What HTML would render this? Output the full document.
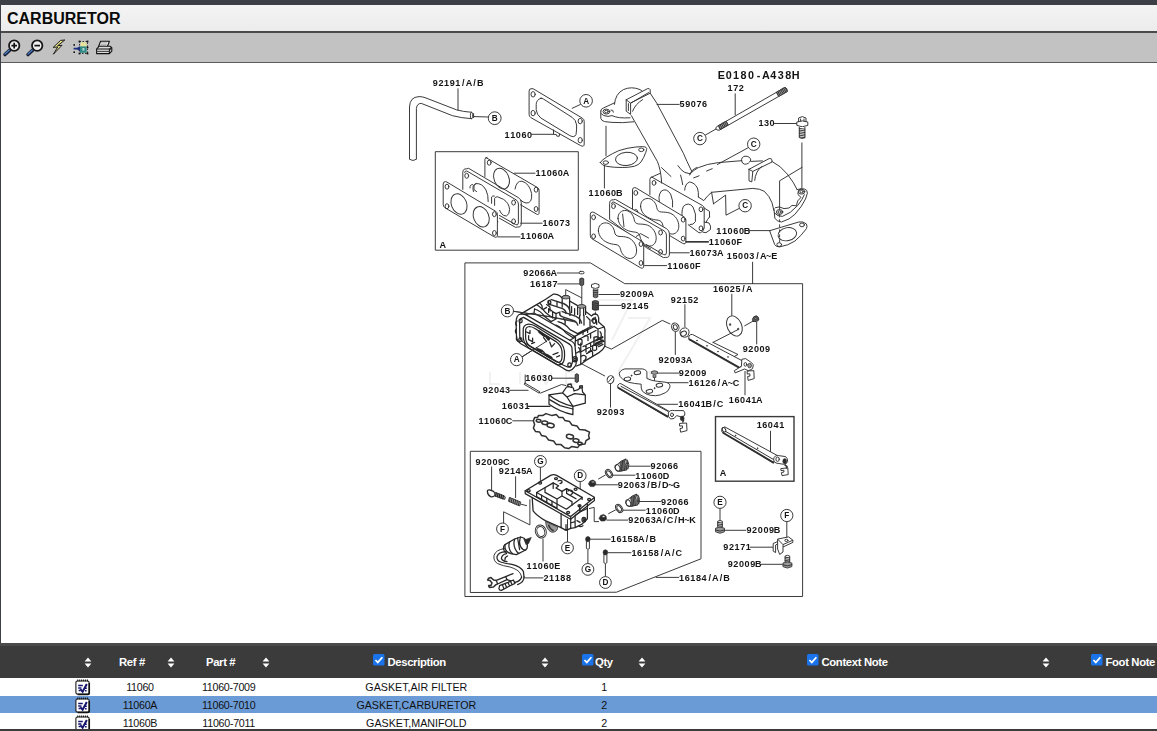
<!DOCTYPE html>
<html><head><meta charset="utf-8"><title>CARBURETOR</title>
<style>
html,body{margin:0;padding:0;}
body{width:1157px;height:731px;overflow:hidden;background:#fff;position:relative;font-family:"Liberation Sans",sans-serif;}
#topbar{position:absolute;left:0;top:0;width:1157px;height:5px;background:#3c3f45;}
#leftedge{position:absolute;left:0;top:0;width:1px;height:644px;background:#3c3f45;}
#title{position:absolute;left:1px;top:5px;width:1156px;height:26px;background:linear-gradient(#f4f4f4,#ececec);}
#title span{position:absolute;left:6px;top:5px;font-size:16px;font-weight:bold;color:#0a0a0a;line-height:18px;}
#titleline{position:absolute;left:0;top:31px;width:1157px;height:2px;background:#4a4a4a;}
#toolbar{position:absolute;left:1px;top:33px;width:1156px;height:29px;background:#c2c2c2;}
#toolline{position:absolute;left:0;top:62px;width:1157px;height:1px;background:#5a5a5a;}
#thead{position:absolute;left:0;top:643px;width:1157px;height:35px;background:#3b3b3b;border-top:3px solid #4a4a4a;box-sizing:border-box;}
.th{position:absolute;top:655px;color:#fff;font-weight:bold;font-size:11.3px;line-height:14px;white-space:nowrap;letter-spacing:-0.35px;}
.row{position:absolute;left:0;width:1157px;height:18px;}

.n{letter-spacing:-0.28px}
.td{position:absolute;font-size:10.7px;line-height:14px;color:#111;white-space:nowrap;transform:translateX(-50%);}
#botline{position:absolute;left:0;top:729px;width:1157px;height:2px;background:#3b3b3b;}
</style></head>
<body>
<div id="topbar"></div>
<div id="title"><span>CARBURETOR</span></div>
<div id="titleline"></div>
<div id="toolbar"></div>
<div id="toolline"></div>
<div id="leftedge"></div>
<svg id="icons" style="position:absolute;left:0;top:33px" width="130" height="29" viewBox="0 33 130 29">
<g stroke-linecap="round">
<line x1="9.6" y1="50.2" x2="5" y2="54.6" stroke="#131c33" stroke-width="3.4"/>
<line x1="9.6" y1="49.8" x2="5" y2="54" stroke="#4f80c8" stroke-width="1.2"/>
<circle cx="14.2" cy="45.6" r="5.2" fill="#f0f0f0" stroke="#181818" stroke-width="1.8"/>
<path d="M11.4 45.6h5.6M14.2 42.8v5.6" stroke="#111" stroke-width="1.7" stroke-linecap="butt"/>
<line x1="32.6" y1="50.2" x2="28" y2="54.6" stroke="#131c33" stroke-width="3.4"/>
<line x1="32.6" y1="49.8" x2="28" y2="54" stroke="#4f80c8" stroke-width="1.2"/>
<circle cx="37.2" cy="45.6" r="5.2" fill="#f0f0f0" stroke="#181818" stroke-width="1.8"/>
<path d="M34.4 45.6h5.6" stroke="#111" stroke-width="1.7" stroke-linecap="butt"/>
</g>
<path d="M64.8 40 L60.6 40.4 L53.2 47.4 L57.8 46.9 L53.4 54.2 L62 45.3 L57.6 45.700 Z" fill="#eeea86" stroke="#1c1c1c" stroke-width="1" stroke-linejoin="round"/>
<g>
<rect x="79.5" y="41.5" width="8" height="12" fill="none" stroke="#222" stroke-width="0.9" stroke-dasharray="1.5 1.5"/>
<rect x="80.6" y="42.4" width="5.8" height="5" fill="#e8e39a"/>
<rect x="80" y="46.4" width="6.6" height="6.4" fill="#2f8a86"/>
<rect x="82.4" y="48" width="2" height="2.6" fill="#b7d9d6"/>
<path d="M73.6 47.8h3.4l3 -1.6v5l-3 -1.6h-3.4z" fill="#1c2f7c"/>
<g fill="#111"><rect x="78.6" y="40.6" width="1.8" height="1.8"/><rect x="86.6" y="40.6" width="1.8" height="1.8"/><rect x="78.6" y="52.6" width="1.8" height="1.8"/><rect x="86.6" y="52.6" width="1.8" height="1.8"/><rect x="73.4" y="44.2" width="1.6" height="1.6"/><rect x="73.4" y="51.4" width="1.6" height="1.6"/><rect x="86.8" y="46.6" width="1.6" height="1.6"/></g>
</g>
<g stroke="#111" stroke-width="1.1" stroke-linejoin="round">
<path d="M100.6 41.2h8.800l-2.200 5.800h-8.800z" fill="#fff"/>
<path d="M96.600 49l2.600-2.800h10.800l1.800 1.400v3.600l-2.400 2.400h-12.800z" fill="#dcdcdc"/>
<path d="M96.600 49h12.800l2.400-1.400M109.400 49v4.600" fill="none"/>
<path d="M96.600 51.400h12.800" stroke="#444" fill="none"/>
<path d="M101 42.800h6.400M100.400 44.300h6.400M99.800 45.800h6.400" stroke="#666" stroke-width="0.600" fill="none"/>
<circle cx="110.800" cy="49.600" r="0.700" fill="#222" stroke="none"/>
</g>
</svg>

<svg id="dg" style="position:absolute;left:0;top:63px;filter:blur(0.4px)" width="1157" height="580" viewBox="0 63 1157 580">
<style>.s{fill:none;stroke:#303030;stroke-width:.95;stroke-linejoin:round;stroke-linecap:round}.w{fill:#fff;stroke:#303030;stroke-width:.95;stroke-linejoin:round}.m{fill:none;stroke:#262626;stroke-width:1.25;stroke-linejoin:round;stroke-linecap:round}.wm2{fill:#fff;stroke:#262626;stroke-width:1.25;stroke-linejoin:round}.b{fill:none;stroke:#3a3a3a;stroke-width:1.4}.k{fill:#2a2a2a;stroke:#2a2a2a;stroke-width:.6}.k2{fill:#5a5a5a;stroke:#2a2a2a;stroke-width:.9}.g{fill:#9a9a9a;stroke:#303030;stroke-width:.8}.t{fill:none;stroke:#303030;stroke-width:1.5;stroke-linejoin:round}.d{fill:none;stroke:#303030;stroke-width:.9;stroke-dasharray:3 2}.l{font:bold 8.9px "Liberation Sans",sans-serif;fill:#141414}.c{font:bold 8.2px "Liberation Sans",sans-serif;fill:#141414}.h{font:bold 10.6px "Liberation Sans",sans-serif;fill:#141414}.wm{fill:none;stroke:#f1f1f1;stroke-width:2}</style>
<text class="l" text-anchor="middle" transform="scale(1.02,1)" x="426.8 432.3 437.8 443.3 448.8 454.3 459.8 465.3 470.9" y="86.3">92191/A/B</text>
<path class="s" d="M458 88.8 L458 110.2"/>
<path class="s" d="M409.5 159 L409.5 107 Q409.8 97 419 96.6 Q423 96.6 426 98 L456.5 109.8 Q463 111.8 471.7 112.3"/>
<path class="s" d="M416.4 159 L416.4 108.5 Q417 103.3 421.3 103.4 L452.5 115.7 Q461 118 471.7 118.7"/>
<path class="s" d="M409.5 159 Q413 162 416.4 159"/>
<ellipse class="s" cx="471.7" cy="115.5" rx="1.3" ry="3.2"/>
<path class="s" d="M473.6 113.6 L473.6 117.6"/>
<path class="s" d="M474.3 116.6 L488.4 117"/>
<circle class="w" cx="494.7" cy="118.2" r="6.4"/>
<text class="c" x="494.7" y="120.9" text-anchor="middle">B</text>
<path class="s" d="M531.6 88.6 Q529.1 88.4 529.1 91 L529.1 114.4 Q529.1 116.6 530.8 117.6 L580.6 145.6 Q584.2 147.4 584.2 144 L584.2 121.4 Q584.2 119.4 582.4 118.2 L533.6 89 Z"/>
<path class="s" d="M541 98.2 Q536.1 99.8 536.2 104.6 L536.2 109.6 Q536.6 114.6 540.8 118 L569.8 135.6 Q574.4 138 576 134.6 Q576.8 130 576.6 125 Q576 119.8 572.2 117.4 L543.4 99 Q542 98.2 541 98.2Z"/>
<ellipse class="s" cx="533.1" cy="94.3" rx="2.1" ry="2.7"/>
<ellipse class="s" cx="533.1" cy="113.1" rx="2.1" ry="2.7"/>
<ellipse class="s" cx="580.2" cy="121.1" rx="2.1" ry="2.7"/>
<ellipse class="s" cx="580.2" cy="140.2" rx="2.1" ry="2.7"/>
<path class="s" d="M553.5 129.9 L553.5 134.2 L556.4 134.6 L556.9 136.2 L559.3 136.2 L559.5 134.2"/>
<text class="l" text-anchor="middle" transform="scale(1.02,1)" x="497.2 502.7 508.2 513.7 519.2" y="137.6">11060</text>
<path class="s" d="M531.6 134.3 L553.5 134.3"/>
<path class="s" d="M580.3 104.5 L572.2 108.3"/>
<circle class="w" cx="586.1" cy="100.8" r="6.3"/>
<text class="c" x="586.1" y="103.5" text-anchor="middle">A</text>
<rect class="s" x="435.7" y="151.7" width="142.6" height="98.5"/>
<text class="l" text-anchor="middle" transform="scale(1.02,1)" x="434" y="247.6">A</text>
<path class="s" d="M487 157.4 Q484.9 157.4 484.9 159.6 L484.9 176.5 M486 157.6 L537.6 187.6 Q539.1 188.6 539.1 190.6 L539.1 212.2 Q539.1 215.6 536.4 214 L520.6 204.8"/>
<ellipse class="s" cx="489.2" cy="162.7" rx="1.9" ry="2.5"/>
<ellipse class="s" cx="536.1" cy="189.7" rx="1.9" ry="2.5"/>
<ellipse class="s" cx="536.1" cy="209" rx="1.9" ry="2.5"/>
<ellipse class="s" cx="501.5" cy="178.6" rx="7.4" ry="10.8" transform="rotate(-22 501.5 178.6)"/>
<path class="s" d="M515 189 Q516.5 180.5 522 181.2 Q529.5 183.5 531.6 193.5 Q532.6 203.5 526 203 Q523 202.5 520.5 200"/>
<text class="l" text-anchor="middle" transform="scale(1.02,1)" x="527.4 532.9 538.4 543.9 549.4 554.9" y="176">11060A</text>
<path class="s" d="M514.3 173.2 L535 173.2"/>
<path class="s" d="M462.8 189.4 L462.8 172.6 Q462.8 168.6 466.6 168.8 L468.6 168.3 L518.6 197.8 Q521.3 199.4 521.3 202.6 L521.3 223.4 Q521.3 227.6 517.4 227 L515.6 227.4 L499.4 218.2"/>
<path class="s" d="M464.6 172.6 Q464.8 170.6 466.8 171 L516 199.8 Q518.4 201.2 518.4 204 L518.4 223 Q518.2 225.8 515.6 224.6 L499.4 215.4"/>
<ellipse class="s" cx="466.7" cy="175.8" rx="1.9" ry="2.5"/>
<ellipse class="s" cx="513.6" cy="202.6" rx="1.9" ry="2.5"/>
<ellipse class="s" cx="513.6" cy="221.4" rx="1.9" ry="2.5"/>
<path class="s" d="M470 188 Q469.6 184.4 472.6 184.6 M473.4 191.6 Q471.6 185 476 183.6 Q482 183 486 190 Q488.4 195 488.2 201.6 M476 183.6 L474 185.4 L474 189.6 L476.6 191.6"/>
<path class="s" d="M491.6 203.4 L491.6 197 Q492.4 195.4 494.4 196 M494.6 205.4 L494.6 198.4 Q495.4 196.6 497.6 196.8 L503.6 199.4 Q509 203 509.6 209.4 Q509.6 214.6 506.4 216 L503.6 215.4 Q500.6 213.6 499.6 210.4"/>
<path class="s" d="M483 212.6 L498 221.6 M485.6 210.6 L497.6 217.6"/>
<text class="l" text-anchor="middle" transform="scale(1.02,1)" x="534.4 539.9 545.4 551 556.5" y="225.7">16073</text>
<path class="s" d="M520.6 223.2 L542.2 223.2"/>
<path class="w" d="M445.4 181.6 Q443.2 181.6 443.2 184 L443.2 204.4 Q443.2 206.8 445 207.8 L493.8 236.6 Q497.4 238.6 497.4 235 L497.4 214.4 Q497.4 212.4 495.8 211.4 L446.8 182 Z"/>
<ellipse class="s" cx="447" cy="186.7" rx="1.9" ry="2.5"/>
<ellipse class="s" cx="447" cy="206.2" rx="1.9" ry="2.5"/>
<ellipse class="s" cx="494.4" cy="214.2" rx="1.9" ry="2.5"/>
<ellipse class="s" cx="494.4" cy="233" rx="1.9" ry="2.5"/>
<ellipse class="s" cx="459" cy="204" rx="7.6" ry="10.6" transform="rotate(-22 459 204)"/>
<ellipse class="s" cx="481.2" cy="216.8" rx="7.6" ry="10.6" transform="rotate(-22 481.2 216.8)"/>
<text class="l" text-anchor="middle" transform="scale(1.02,1)" x="512.6 518.1 523.6 529.1 534.6 540.1" y="239.5">11060A</text>
<path class="s" d="M497.8 236.9 L520 236.9"/>
<text class="h" text-anchor="middle" transform="scale(1.02,1)" x="707.1 714.4 721.7 729 736.3 743.6 750.9 758.2 765.5 772.8 780.1" y="79.5">E0180-A438H</text>
<text class="l" text-anchor="middle" transform="scale(1.02,1)" x="715.8 721.3 726.8" y="90.7">172</text>
<path class="s" d="M735.2 93.8 L735.2 114.9"/>
<path class="w" d="M717.2 126.4 L784.6 87.6 Q787.4 87.6 787.2 91.6 L719.4 130.2 Q716.4 130.6 715.8 128.6 Q715.8 127 717.2 126.4Z"/>
<path class="g" d="M776.6 92.2 L784.6 87.6 Q787.4 87.6 787.2 91.6 L778.8 96.4Z M718.4 125.7 L726.2 121.2 L728 124.8 L720 129.6Z"/>
<path class="s" d="M718.6 125.6 L720.6 129.2"/>
<path class="s" d="M720.1 124.7 L722.1 128.3"/>
<path class="s" d="M721.6 123.9 L723.6 127.5"/>
<path class="s" d="M723.1 123 L725.1 126.6"/>
<path class="s" d="M724.6 122.2 L726.6 125.8"/>
<path class="s" d="M726.1 121.3 L728.1 124.9"/>
<path class="s" d="M776.4 92.3 L778.4 95.9"/>
<path class="s" d="M777.9 91.5 L779.9 95.1"/>
<path class="s" d="M779.3 90.6 L781.3 94.2"/>
<path class="s" d="M780.8 89.8 L782.8 93.4"/>
<path class="s" d="M782.2 89 L784.2 92.6"/>
<path class="s" d="M783.6 88.1 L785.6 91.7"/>
<path class="s" d="M785.1 87.3 L787.1 90.9"/>
<path class="s" d="M705.3 135.1 L716 129"/>
<circle class="w" cx="699.9" cy="138.6" r="6.2"/>
<text class="c" x="699.9" y="141.3" text-anchor="middle">C</text>
<text class="l" text-anchor="middle" transform="scale(1.02,1)" x="746 751.5 757" y="126.1">130</text>
<path class="s" d="M774.2 123.5 L796.7 123.5"/>
<path class="w" d="M798.6 122 L798.6 118 Q802.2 115.2 806 118 L806 122 M796.8 122 Q802.2 119.8 807.8 122 L807.8 125.4 Q802.2 128.2 796.8 125.4Z M800.6 118.6 L800.6 121.4 M804 118.6 L804 121.4"/>
<path class="w" d="M799.3 127 L799.3 137.6 Q802.1 139.4 804.9 137.6 L804.9 127"/>
<path class="s" d="M799.3 128.4 L804.9 129.2"/>
<path class="s" d="M799.3 130.1 L804.9 130.9"/>
<path class="s" d="M799.3 131.8 L804.9 132.6"/>
<path class="s" d="M799.3 133.5 L804.9 134.3"/>
<path class="s" d="M799.3 135.2 L804.9 136"/>
<path class="s" d="M799.3 136.9 L804.9 137.7"/>
<path class="s" d="M801.9 142.9 L801.9 188.4"/>
<path class="s" d="M801.9 167.4 L779.6 180.8 L779.6 209.5"/>
<text class="l" text-anchor="middle" transform="scale(1.02,1)" x="668.7 674.2 679.8 685.3 690.8" y="107.3">59076</text>
<path class="s" d="M657 104.4 L679.2 104.4"/>
<path class="s" d="M600.8 111 Q600.6 109 603.4 108 L614.6 102.8 M600.8 111 L600.8 118.4 Q601.2 120.6 604.6 121.6 L612 122.4 Q622 123.2 633.6 121.8 M601 113.6 Q603 116.2 608 116.4 L612 115.6 Q618 118.6 630 117.8"/>
<ellipse class="s" cx="606.4" cy="111.6" rx="3.4" ry="2.5"/>
<ellipse class="s" cx="606.4" cy="111.6" rx="1.8" ry="1.3"/>
<path class="s" d="M611 110 Q613.4 109.4 613.4 112.2"/>
<path class="s" d="M614.4 104.4 Q615.4 93.6 623.4 89.6 Q631.6 86 640 89.6 L642 91"/>
<path class="s" d="M626.2 99.8 L647.6 88.6 Q649.8 88.4 650.2 89.6 L650.2 93.2 L631 102.8 M626.2 99.8 L626.2 111.2 L630.6 114.4 L630.6 103.2 L626.2 99.8 M628.4 103.6 L628.4 110.6"/>
<path class="s" d="M630.6 103.2 L648.6 92.6"/>
<path class="s" d="M650.2 93.2 L657 103.6 L683.4 153.3 Q686.6 161 691.6 171"/>
<path class="s" d="M631.4 115.7 L657.4 161.5 Q660.6 169 661.5 180.6"/>
<path class="s" d="M632.6 111.2 Q635 104.4 642.6 99.6"/>
<path class="s" d="M600.3 162.6 Q601 160.6 606.4 157.2 Q612 153.6 618.7 150.7 Q627 147.8 635.9 147 L642.5 146.6 Q647.6 146.8 646.6 149.6 L645.8 152.3 Q644 157.6 640.9 162.1 Q638.6 165 634.3 166.3 Q628 167.6 622.8 167.5 Q614 167.6 606.4 166.3 Q602 165.6 600.3 162.6Z"/>
<ellipse class="s" cx="626.5" cy="158.9" rx="11" ry="6.6" transform="rotate(-5 626.5 158.9)"/>
<ellipse class="s" cx="605.8" cy="162.6" rx="2.7" ry="1.8"/>
<ellipse class="s" cx="641.3" cy="149.8" rx="2.6" ry="1.8"/>
<path class="s" d="M606 126.2 L606 155.8"/>
<path class="s" d="M604.4 165.6 L604.4 188"/>
<text class="l" text-anchor="middle" transform="scale(1.02,1)" x="579.5 585 590.5 596 601.6 607.1" y="196.5">11060B</text>
<path class="s" d="M661.5 167.6 L671 176.5 M677.9 165.6 Q681 170.4 684.7 172.4 L690.2 173.8 M680.6 175.1 Q682 180 682.7 184.7"/>
<path class="s" d="M690.2 173.8 Q693.6 170 698.4 167.6 Q707 163.8 718.3 162.6 L741.6 160.7"/>
<path class="s" d="M741.6 160.7 Q741 157 745 156.2 Q750 156 750.8 160 Q749 164.4 744.6 164.2 Q741.8 163.6 741.6 160.7 M750.9 161.4 L762.4 160.9"/>
<path class="s" d="M772 161.4 Q781 166 787.3 174.1 Q794 182.6 797 189.4"/>
<path class="s" d="M749 169.3 L769.1 158.6 Q771.4 158.2 772 159.7 L772 162 L752.8 171.4 M749 169.3 L749 180.8 L751.8 181.9 L752.8 171.4 L749 169.3"/>
<path class="s" d="M754.7 180.4 Q755.4 171.4 761.6 166.6"/>
<path class="s" d="M711.6 192.3 L752.8 188.4 Q760 188.6 764.3 191.3 Q769.6 196 772 202.8 L773.9 210.5"/>
<path class="s" d="M773.9 208.5 L774.8 218.1 Q776.6 221.6 781.5 222 Q790 219.6 794.9 214.3 Q802 206.6 805.5 199 L807.4 193.2 Q807.4 189.6 804.5 189 Q801 188.2 797 189.6"/>
<path class="s" d="M774.4 213 Q777.6 216.6 782.4 216.4 Q790.6 213.6 797.6 205.6 Q802.4 199.6 804.4 194.6 M775.4 207.6 Q779 205.6 784 208.6 Q790 209 792 205.4 L796.4 205.8 L797.6 201 L801 197.4 L798 194.6 Q797.4 190.6 800.6 189"/>
<ellipse class="s" cx="779.6" cy="212" rx="3.2" ry="2.4"/>
<ellipse class="s" cx="779.6" cy="212" rx="1.6" ry="1.2"/>
<ellipse class="s" cx="801.6" cy="191.7" rx="3.2" ry="2.4"/>
<ellipse class="s" cx="801.6" cy="191.7" rx="1.6" ry="1.2"/>
<path class="s" d="M684.7 190.2 Q685 183.6 689.6 182 Q694.6 182.6 697.4 188 Q698.8 192 698.4 197"/>
<path class="s" d="M689.6 175 Q691 169.4 697.2 167.4"/>
<path class="s" d="M693.6 177.9 L699.1 175.8"/>
<path class="s" d="M706.6 171 L712.2 168.7"/>
<path class="s" d="M748.2 147.7 L717.4 164.5"/>
<circle class="w" cx="753.7" cy="144.2" r="6.2"/>
<text class="c" x="753.7" y="146.9" text-anchor="middle">C</text>
<path class="s" d="M711.6 192.3 L713.5 203.8 M713.5 203.8 L725.6 195.1 L726 215.2 L739 208.5"/>
<circle class="w" cx="745.1" cy="205.7" r="6.2"/>
<text class="c" x="745.1" y="208.4" text-anchor="middle">C</text>
<path class="s" d="M652 176.9 Q649.9 176.9 649.9 179.4 L649.9 194.6 M651.6 177 L702.6 205.6 Q704.2 206.6 704.2 208.6 L704.2 228 Q703.6 231.4 700.6 232.7 L698.9 232.7 L688.2 224.7"/>
<ellipse class="s" cx="654" cy="182.9" rx="1.9" ry="2.4"/>
<ellipse class="s" cx="701" cy="209.3" rx="1.9" ry="2.4"/>
<ellipse class="s" cx="701" cy="228.3" rx="1.9" ry="2.4"/>
<path class="s" d="M660.4 205 Q657 196.6 661.4 191 Q666.4 187.6 670.6 194 Q673.6 201 672.6 207 "/>
<path class="s" d="M683.4 221 Q680.4 213 683.4 206.4 Q688.4 201.4 693 207 Q696.6 213.6 695.4 221.6 Q693.4 225.2 690 224.6"/>
<path class="s" d="M704.2 208 L709.5 211.4 L709.5 217 M704.2 222 L709 223 Q711.4 226 710.4 229.6 L706 232.7 L703 232.2 M709.5 217 Q707 219.6 706 222.4"/>
<path class="s" d="M661.5 180.6 L661.6 183 M652.6 176.7 L660 173.4"/>
<path class="s" d="M698.4 197 L703.8 200.6 Q707 196 711.6 192.3"/>
<path class="w" d="M634.6 187.6 Q632.5 187.6 632.5 190 L632.5 211.2 Q632.5 213.4 634.2 214.4 L682.4 243.2 Q685.9 245 685.9 241.6 L685.9 220 Q685.9 218 684.2 217 L636.2 188 Z"/>
<ellipse class="s" cx="635.8" cy="192.9" rx="1.9" ry="2.4"/>
<ellipse class="s" cx="635.8" cy="211.9" rx="1.9" ry="2.4"/>
<ellipse class="s" cx="683.2" cy="219.7" rx="1.9" ry="2.4"/>
<ellipse class="s" cx="683.2" cy="238.6" rx="1.9" ry="2.4"/>
<path class="s" d="M640.6 206.6 C640.2 201.1 644.2 198 648.7 198.5 C653.2 199.2 656.2 203.6 656.8 207.6 C657.2 210.6 658.7 211.6 661.2 212 C664.2 212.2 666.7 212 670.2 213.2 C675.2 215.2 679 220.6 678.8 226.6 C678.6 231.6 675.2 234.6 671.2 234 C666.7 233.2 663.6 229 662.8 225.1 C662.2 222.1 660.7 220.6 658.2 220.2 C654.7 219.8 652.2 219.4 649.2 218 C644.2 215.6 641 211.6 640.6 206.6Z"/>
<text class="l" text-anchor="middle" transform="scale(1.02,1)" x="697.3 702.8 708.3 713.8 719.3 724.8" y="245.3">11060F</text>
<path class="s" d="M686.4 242.2 L708.4 242.2"/>
<path class="w" d="M609.6 219.4 L609.6 203.6 Q609.6 199.6 613.4 199.8 L615.4 199.4 L666.4 228.6 Q669.4 230.4 669.4 233.6 L669.4 254 Q669.4 258 665.6 257.4 L663.4 257.6 L646.4 247.6Z"/>
<path class="s" d="M611.6 203.6 Q611.8 201.6 613.8 202 L664 230.8 Q666.4 232.2 666.4 235 L666.4 253 Q666.2 255.8 663.6 254.6 L646.4 244.6"/>
<ellipse class="s" cx="613.5" cy="206.2" rx="1.9" ry="2.4"/>
<ellipse class="s" cx="660.6" cy="232.6" rx="1.9" ry="2.4"/>
<ellipse class="s" cx="660.6" cy="251.9" rx="1.9" ry="2.4"/>
<path class="s" d="M618 218.6 C617.6 213.1 621.6 210 626.1 210.5 C630.6 211.2 633.6 215.6 634.2 219.6 C634.6 222.6 636.1 223.6 638.6 224 C641.6 224.2 644.1 224 647.6 225.2 C652.6 227.2 656.4 232.6 656.2 238.6 C656 243.6 652.6 246.6 648.6 246 C644.1 245.2 641 241 640.2 237.1 C639.6 234.1 638.1 232.6 635.6 232.2 C632.1 231.8 629.6 231.4 626.6 230 C621.6 227.6 618.4 223.6 618 218.6Z"/>
<path class="s" d="M622.6 214 L624 226.6 M636.4 236.4 L640.6 233.6 L648.6 238 M644 245 L650.4 248.6"/>
<text class="l" text-anchor="middle" transform="scale(1.02,1)" x="678.5 684 689.6 695.1 700.6 706.1" y="256.3">16073A</text>
<path class="s" d="M669.6 252.8 L689.2 252.8"/>
<path class="w" d="M592.4 212 Q590.3 212 590.3 214.4 L590.3 235.6 Q590.3 237.8 592 238.8 L640.2 267.6 Q643.7 269.4 643.7 266 L643.7 244.4 Q643.7 242.4 642 241.4 L594 212.4 Z"/>
<ellipse class="s" cx="593.6" cy="217.3" rx="1.9" ry="2.4"/>
<ellipse class="s" cx="593.6" cy="236.3" rx="1.9" ry="2.4"/>
<ellipse class="s" cx="641" cy="244.1" rx="1.9" ry="2.4"/>
<ellipse class="s" cx="641" cy="263" rx="1.9" ry="2.4"/>
<path class="s" d="M598.4 231 C598 225.5 602 222.4 606.5 222.9 C611 223.6 614 228 614.6 232 C615 235 616.5 236 619 236.4 C622 236.6 624.5 236.4 628 237.6 C633 239.6 636.8 245 636.6 251 C636.4 256 633 259 629 258.4 C624.5 257.6 621.4 253.4 620.6 249.5 C620 246.5 618.5 245 616 244.6 C612.5 244.2 610 243.8 607 242.4 C602 240 598.8 236 598.4 231Z"/>
<text class="l" text-anchor="middle" transform="scale(1.02,1)" x="656.6 662.1 667.6 673.1 678.6 684.1" y="268.7">11060F</text>
<path class="s" d="M644.6 265.6 L666.6 265.6"/>
<path class="s" d="M770 230.6 L798.8 222 Q803 221 806.4 223.9 Q807.6 226.4 806.4 228.7 Q801 236 794.9 241.1 Q788 245.6 779.6 246.9 Q775.6 246.9 774.8 244.9 Z"/>
<ellipse class="s" cx="787.3" cy="234.2" rx="9.4" ry="6.5" transform="rotate(-12 787.3 234.2)"/>
<ellipse class="s" cx="802" cy="224.9" rx="2.4" ry="1.9"/>
<ellipse class="s" cx="779.2" cy="244.6" rx="2.4" ry="1.9"/>
<path class="d" d="M779.6 214.3 L779.6 243"/>
<text class="l" text-anchor="middle" transform="scale(1.02,1)" x="704.8 710.3 715.8 721.3 726.9 732.4" y="233.6">11060B</text>
<path class="s" d="M749.3 230.6 L770 230.6"/>
<path class="s" d="M685.7 241.5 L708.4 241.5"/>
<text class="l" text-anchor="middle" transform="scale(1.02,1)" x="715.1 720.6 726.1 731.6 737.1 742.7 748.2 753.7 759.2" y="259.1">15003/A~E</text>
<path class="s" d="M752.6 262.2 L752.6 283.6"/>
<path class="s" d="M464.9 596.1 L464.9 262.9 L590.4 262.9 L624.8 283.7 L802.6 283.7 L802.6 596.1 Z"/>
<path class="s" d="M470.3 592.1 L470.3 451.3 L701 451.3 L701 558.8 L616.7 592.1 Z"/>
<path class="wm" d="M598 300 L632 300 L612 340 M628 318 L650 318 L618 372 M490 372 L490 384 L500 384 M520 372 L520 384 M540 372 L546 384 L552 372 M575 372 L566 372 L566 384 L575 384 M566 378 L573 378 M640 372 L640 384 M640 372 L650 372 L650 378 L640 378 L650 384"/>
<text class="l" text-anchor="middle" transform="scale(1.02,1)" x="515.5 521 526.5 532 537.5 543" y="276.1">92066A</text>
<path class="s" d="M557.2 273 L579 273"/>
<path class="s" d="M580.4 271.4 L582.8 271.4 Q584 271.4 584 272.6 Q584 273.8 582.8 273.8 L580.4 273.8 Q579.2 273.8 579.2 272.6 Q579.2 271.4 580.4 271.4Z"/>
<text class="l" text-anchor="middle" transform="scale(1.02,1)" x="522.1 527.6 533.1 538.6 544.1" y="287">16187</text>
<path class="s" d="M557.8 283.9 L579.4 283.9"/>
<path class="k2" d="M579.8 278.8 Q581.8 277 583.7 278.8 L583.7 284.6 L581.8 286.4 L579.8 284.6Z"/>
<path class="s" d="M581.8 287.4 L581.8 305"/>
<text class="l" text-anchor="middle" transform="scale(1.02,1)" x="610.3 615.8 621.3 626.8 632.3 637.9" y="297.5">92009A</text>
<path class="s" d="M599 294.5 L619.5 294.5"/>
<path class="w" d="M591.5 284.6 Q595.2 282.2 599 284.6 L599 287.4 Q595.2 289.6 591.5 287.4Z"/>
<path class="g" d="M593.4 288.6 L593.4 297 Q595.6 298.6 597.8 297 L597.8 288.6"/>
<path class="s" d="M593.3 290.6 L597.5 290.6"/>
<path class="s" d="M593.3 292.4 L597.5 292.4"/>
<path class="s" d="M593.3 294.2 L597.5 294.2"/>
<path class="s" d="M593.3 296 L597.5 296"/>
<text class="l" text-anchor="middle" transform="scale(1.02,1)" x="611.3 616.8 622.3 627.8 633.3" y="308.7">92145</text>
<path class="s" d="M599 305.4 L620.6 305.4"/>
<path class="k2" d="M592.4 301.4 Q595.4 299.6 598.4 301.4 L598.4 309.4 Q595.4 311.2 592.4 309.4Z"/>
<path class="s" d="M592.4 302.6 L598.4 303.8"/>
<path class="s" d="M592.4 304.6 L598.4 305.8"/>
<path class="s" d="M592.4 306.6 L598.4 307.8"/>
<path class="s" d="M592.4 308.6 L598.4 309.8"/>
<path class="d" d="M595.4 311.6 L595.4 318"/>
<path class="s" d="M565.7 295.2 L565.7 289.6 L581.6 297.8"/>
<path class="s" d="M513.6 311.3 L549 316.6 L575 322"/>
<circle class="w" cx="507.4" cy="310.8" r="6.1"/>
<text class="c" x="507.4" y="313.5" text-anchor="middle">B</text>
<path class="s" d="M522.3 356.7 L546.3 341.4"/>
<circle class="w" cx="516.6" cy="359.6" r="6.1"/>
<text class="c" x="516.6" y="362.3" text-anchor="middle">A</text>
<text class="l" text-anchor="middle" transform="scale(1.02,1)" x="517.4 522.9 528.4 533.9 539.4" y="381.5">16030</text>
<path class="s" d="M552.4 378.2 L575 378.2"/>
<path class="k2" d="M575.2 374.6 Q576.8 372.8 578.4 374.6 L578.4 381.6 Q576.8 383.4 575.2 381.6Z"/>
<text class="l" text-anchor="middle" transform="scale(1.02,1)" x="475.7 481.2 486.7 492.2 497.7" y="393.4">92043</text>
<path class="s" d="M510.3 390.3 L528.1 390.3"/>
<path class="s" d="M525.2 383.2 L539.8 391.8 L539.2 393.2 L524.6 384.6Z"/>
<path class="s" d="M525.2 375 L525.2 383"/>
<path class="s" d="M540.5 393.1 L561.6 384.5 L566 385.6"/>
<path class="s" d="M580.8 363.4 L604.7 375.9"/>
<ellipse class="s" cx="610.5" cy="379.6" rx="3.3" ry="4" transform="rotate(20 610.5 379.6)"/>
<path class="s" d="M608.4 382 L612.6 377.2"/>
<path class="s" d="M610.5 384.2 L610.5 407.2"/>
<text class="l" text-anchor="middle" transform="scale(1.02,1)" x="587.5 593 598.5 604 609.5" y="414.9">92093</text>
<path class="s" d="M604.7 346.2 L611.4 349.1 L662.3 320.4 L669.9 323.9"/>
<text class="l" text-anchor="middle" transform="scale(1.02,1)" x="660.2 665.7 671.2 676.7 682.2" y="303.1">92152</text>
<path class="s" d="M684.9 304.7 L684.9 326.7"/>
<path class="w" d="M680 331 Q681.6 327.4 685.6 327.8 Q689.4 329 689 333 L687.6 336.6 Q684.6 338 681.4 336.4 Q679.6 334 680 331Z"/>
<ellipse class="s" cx="683.6" cy="333.6" rx="3" ry="2.4" transform="rotate(-30 683.6 333.6)"/>
<ellipse class="s" cx="675.3" cy="327.2" rx="3.6" ry="4.3" transform="rotate(-25 675.3 327.2)"/>
<ellipse class="s" cx="675.3" cy="327.2" rx="1.9" ry="2.5" transform="rotate(-25 675.3 327.2)"/>
<path class="s" d="M675.3 332 L675.3 354.5"/>
<text class="l" text-anchor="middle" transform="scale(1.02,1)" x="648 653.5 659 664.5 670 675.5" y="363">92093A</text>
<text class="l" text-anchor="middle" transform="scale(1.02,1)" x="701.5 707 712.5 718 723.5 729 734.5" y="292.5">16025/A</text>
<path class="s" d="M731.8 294.2 L731.8 316.2"/>
<ellipse class="w" cx="734.4" cy="326" rx="7.2" ry="10.6" transform="rotate(-25 734.4 326)"/>
<ellipse class="k" cx="730.1" cy="324.6" rx="0.7" ry="1"/>
<ellipse class="k" cx="738.2" cy="329" rx="0.8" ry="0.8"/>
<path class="s" d="M713 342.4 L738 329.6"/>
<path class="s" d="M744.7 325.8 L753.3 321"/>
<path class="k2" d="M752.4 319.4 Q753.2 316 756.4 315.8 Q759.2 316.8 758.8 320 L756.6 321.6 L753 321.4Z"/>
<ellipse class="w" cx="755.8" cy="318.6" rx="1" ry="0.8"/>
<path class="s" d="M756.7 322.4 L756.7 344"/>
<text class="l" text-anchor="middle" transform="scale(1.02,1)" x="730.6 736.1 741.6 747.1 752.6" y="352.5">92009</text>
<path class="s" d="M713 342.4 L738 354.5 L734.1 356.6"/>
<path class="w" d="M690.6 334.6 Q688 335.6 688.8 339 L739.6 367.6 L744.6 363.6 L743 361.2 L692.4 334.4 Z"/>
<path class="s" d="M689.4 339.4 L739.6 367.8" style="stroke-width:1.9"/>
<ellipse class="k" cx="697" cy="340.6" rx="0.5" ry="0.5"/>
<ellipse class="k" cx="707" cy="345.8" rx="0.5" ry="0.5"/>
<ellipse class="k" cx="718" cy="351.6" rx="0.5" ry="0.5"/>
<ellipse class="k" cx="728" cy="356.9" rx="0.5" ry="0.5"/>
<path class="w" d="M741.8 359.3 L745.6 358.6 L750.6 362 L753.3 364.6 L752.6 368.6 L748.6 370.8 L744.6 369 L735.1 372.9 L734.4 370.6 L741.4 366.4Z"/>
<ellipse class="g" cx="749.6" cy="365.6" rx="1.9" ry="2.2"/>
<ellipse class="s" cx="745.4" cy="364.4" rx="1.4" ry="1.8"/>
<path class="s" d="M747.6 371 L753.8 370.6 L754.2 378.6 L748.2 380.4 L747.6 376.6 L750 376 L749.8 373.8 L747.6 374Z"/>
<path class="s" d="M745 371.4 L745 394.8"/>
<text class="l" text-anchor="middle" transform="scale(1.02,1)" x="717 722.5 728 733.5 739 744.5" y="403.3">16041A</text>
<text class="l" text-anchor="middle" transform="scale(1.02,1)" x="668 673.6 679.1 684.6 690.1" y="376.5">92009</text>
<path class="s" d="M657.6 373.1 L678.6 373.1"/>
<path class="g" d="M651.4 371.6 Q654.4 369.8 657.5 371.6 L657.5 373.6 Q654.4 375.4 651.4 373.6Z M653 375 L653 377.4 L655.9 377.4 L655.9 375"/>
<path class="d" d="M654.5 378 L654.5 388"/>
<text class="l" text-anchor="middle" transform="scale(1.02,1)" x="677.5 683 688.5 694 699.5 705 710.5 716 721.5" y="386">16126/A~C</text>
<path class="s" d="M666.1 382.7 L688.1 382.7"/>
<path class="w" d="M619.2 373.7 Q620 370 624.9 368.9 L642.2 368.9 Q646.9 369.6 646.9 372.7 L646.9 378.5 Q652 381 657.5 381.3 L666.1 382.3 Q670.6 383.6 669.9 387.1 Q668.6 391.4 665.2 392.8 Q660 395.6 655.6 395.7 Q649.6 395.8 646 393.8 Q641.2 391.6 641.2 388 L641.2 384.2 Q634 383.6 628.7 382.3 Q621.6 379.6 620.1 376.5 Z"/>
<ellipse class="s" cx="627.4" cy="379" rx="3.3" ry="1.9" transform="rotate(-8 627.4 379)"/>
<ellipse class="s" cx="637.4" cy="372.7" rx="3.3" ry="1.9" transform="rotate(-8 637.4 372.7)"/>
<ellipse class="s" cx="649.4" cy="391.3" rx="3.3" ry="1.9" transform="rotate(-8 649.4 391.3)"/>
<ellipse class="s" cx="659.4" cy="385.2" rx="3.3" ry="1.9" transform="rotate(-8 659.4 385.2)"/>
<ellipse class="k" cx="631.6" cy="375.6" rx="0.6" ry="0.6"/>
<ellipse class="k" cx="654.6" cy="388.2" rx="0.6" ry="0.6"/>
<text class="l" text-anchor="middle" transform="scale(1.02,1)" x="667.4 672.9 678.4 683.9 689.4 694.9 700.4 705.9" y="407.5">16041B/C</text>
<path class="s" d="M657.5 404.3 L677.6 404.3"/>
<path class="w" d="M619.4 383.6 Q617 384.6 617.8 388 L667.4 416.8 L670.6 412.2 L620.8 383.6 Z"/>
<path class="s" d="M621 386.4 L668 411.4"/>
<path class="s" d="M618.6 388 L667.6 416.6" style="stroke-width:1.9"/>
<path class="w" d="M668.3 413 Q669.6 409.6 674.6 410.6 L683.6 410.6 Q685.6 412.6 684.6 415.6 L681.6 417 L676.6 415.6 Q674.6 419.6 670.6 419 Q667.6 417 668.3 413Z"/>
<ellipse class="s" cx="672" cy="414.8" rx="1.5" ry="1.8"/>
<ellipse class="k" cx="682.2" cy="418.4" rx="1.9" ry="2.3"/>
<path class="t" d="M680.6 418 L683.6 420 L682.6 422.6"/>
<path class="s" d="M679.9 423.4 L686.6 423 L687 430.6 L680.6 432.2 L680 428.6 L682.6 428 L682.4 425.8 L680 426Z"/>
<text class="l" text-anchor="middle" transform="scale(1.02,1)" x="494.5 500 505.5 511 516.6" y="409.3">16031</text>
<path class="m" d="M528.3 406.3 L550 406.3"/>
<path class="wm2" d="M549 394.9 L549 404.2 Q560 412 572.9 414.6 L572.9 406.3 Q559 403 549 394.9Z"/>
<path class="m" d="M549.6 399.6 L560 405.6 L572.9 409"/>
<path class="m" d="M549 394.9 L562.5 392.8 L566.6 387 L568.7 386.6 L573.4 388 L574 391 L578 389.7 L580.6 387.6 L582 388 L582.6 392 L585.3 394.9 L585.3 403.2 L572.9 406.3 M562.5 392.8 L567 397 L572.9 406.3 M567 397 L574.6 393.6 L585.3 394.9"/>
<path class="t" d="M567.6 386.8 L568 384.4 L571 384 L572 387.4 M579.6 388.4 L579.8 386 L582.2 385.8 L582.4 388.2"/>
<text class="l" text-anchor="middle" transform="scale(1.02,1)" x="471.6 477.1 482.6 488.1 493.6 499.1" y="424.2">11060C</text>
<path class="s" d="M512.7 420.8 L533.4 420.8"/>
<path class="t" d="M533.4 420.8 L534.6 417.6 L537.6 417.4 L538.6 415.4 L542.6 415.6 L546 413.6 L552 415.6 L556.3 414.6 L559 417.4 L563 417.6 L565 420.6 L569.6 421.6 L572 425 L577 426 L579.6 429.6 L585 430 L589.5 432.2 L588.6 435.6 L589.4 438.5 L586 440.6 L585 444 L580 444.6 L577.6 447.6 L571.6 446.6 L568.6 448.6 L564.6 447.8 L561 444.6 L556 444.4 L553.6 441 L548.6 440 L546 436.6 L541.6 435.6 L539.6 432 L535.6 431.6 L533.4 428.1 L534.6 424.6Z"/>
<ellipse class="t" cx="538.6" cy="420.8" rx="2.4" ry="1.4" transform="rotate(8 538.6 420.8)"/>
<ellipse class="t" cx="544.8" cy="422.8" rx="3" ry="1.8" transform="rotate(8 544.8 422.8)"/>
<ellipse class="t" cx="550.6" cy="425.4" rx="3.6" ry="2.2" transform="rotate(8 550.6 425.4)"/>
<ellipse class="t" cx="570" cy="436.6" rx="3.6" ry="2.2" transform="rotate(8 570 436.6)"/>
<ellipse class="t" cx="576" cy="440.6" rx="3" ry="1.8" transform="rotate(8 576 440.6)"/>
<ellipse class="t" cx="580" cy="443.6" rx="2.2" ry="1.3" transform="rotate(8 580 443.6)"/>
<path class="wm2" d="M517.1 316.9 Q518 314.4 521 313.9 L525.6 314.6 L569.8 340.3 Q574.6 342.6 575 345.5 L576.3 360.4 Q576.6 364 575 366.3 Q572.6 370 569.1 370.8 Q566 370.6 563.3 368.2 L520.4 343.5 Q517 341 516.5 337.7 L516.1 322.7 Q516 319 517.1 316.9Z"/>
<path class="m" d="M517 321 Q514.6 323 516.6 325.6 M516.4 329 Q514.4 331 516.4 333.6 M516.8 337 Q515.4 340 518.4 341.6"/>
<path class="m" d="M520.6 318.6 L523.6 317.4 L567 342.6 Q571.6 345 572 348 L572.6 361 Q572 366.6 567.6 367 L563 365 L523 342 Q520 340 519.8 336.6 L519.6 322Z"/>
<path class="m" d="M523.2 331 Q522.6 324.6 528.6 324.1 Q532 324 536 326.6 L557 339.6 Q563.6 344 564.4 351 Q565 358 563.6 361.6 Q561.6 366 557 364.6 L529 348 Q523.6 344 523.2 337 Z"/>
<path class="m" d="M525.6 331.6 Q525.2 326.8 529.6 326.5 Q532 326.6 535.4 328.8 L556 341.6 Q561.4 345.6 562 351.4 Q562.4 357.4 561.4 360.2 Q560 363.2 556.6 362 L530.2 346.4 Q525.8 343 525.6 337.4Z"/>
<path class="m" d="M526.6 332 L530 333.6 L530 330.4 M528.6 335.6 L528.6 339.6 L532.6 341.6 L532.6 338 M531.6 343.6 L534.6 342.4 M549.7 342.1 L551.6 346.9 L554.6 343.6 M553 354.6 L558 352.6 M556.6 357 L559.6 355.6 M543.6 337.6 L546.6 341.6"/>
<path class="t" d="M537.7 330.4 Q540 331 541.6 333.4 Q543 336 546 336.4 Q549 337 549.7 339 M536.5 347 Q537 350 540 350.6 Q543.6 351 545 353.6 Q546.6 356.6 550 357 L552.4 358"/>
<path class="m" d="M539.6 332 L544 335.6 M546.6 337 L548.6 339.4 M538.6 349.6 L541.6 351 M546.4 355 L550.6 357.4" style="stroke-width:2.6"/>
<path class="m" d="M525.6 314.6 L534 313 L575.6 337 L575 345.5 M534 313 L534.6 309 M569.8 340.3 L575.6 337"/>
<path class="m" d="M521 313.9 L536.6 304.6 L545.7 299.3 L553.5 294.1 Q557 293.6 560 296 L562.2 298"/>
<path class="m" d="M569.6 301 L577.6 305.6 M585.6 311.6 L591.6 316 Q594 312.6 597.6 315 Q599.6 318 598.6 322 L604.2 327 Q605.6 330 604.9 334 L604.9 346.1 Q603 350.6 599 352.6 L586 360.4 L580.8 364.3 L576.3 366"/>
<path class="wm2" d="M562.2 302.2 L562.2 297 Q565.9 294.4 569.6 297 L569.6 302.2"/>
<ellipse class="g" cx="565.9" cy="297.2" rx="3.7" ry="1.8"/>
<path class="m" d="M562.2 302.2 L562.2 307"/>
<path class="m" d="M569.6 302.2 L569.6 309.6"/>
<path class="wm2" d="M577.6 315 L577.6 306.4 Q581.6 303.4 585.6 306.4 L585.6 315.1"/>
<ellipse class="g" cx="581.6" cy="306.4" rx="4" ry="1.9"/>
<path class="m" d="M580 308.4 L580 315.6"/>
<path class="m" d="M583.6 308.4 L583.6 315.6"/>
<path class="m" d="M579.6 315.6 L579.6 323.6 M584 315.6 L584 325"/>
<path class="t" d="M548.6 300.6 Q547.6 303.6 550.4 304.6 L562.6 308.6 Q566.4 310.6 566 314 M550.6 299.4 L564 303.8 Q570 306.6 570 312.6 L570 316"/>
<path class="t" d="M560 312.6 Q559 315.6 562 316.6 L574.6 321 Q577.6 322.6 578 325.6 M561.6 311.4 L576 316.4 Q581 318.6 581.6 323.6"/>
<ellipse class="m" cx="549.4" cy="302.6" rx="1.4" ry="2.2"/>
<path class="m" d="M536.6 304.6 L543 309.6 Q548 316 555.6 318.4 M534.6 309 Q541 311 544.6 316.6 L551 321.6 M543 309.6 L546.6 307.4 M551 321.6 L556 319 L556 313.6 L552.6 311.6 L552.6 318 M556 313.6 L560 312 M548.6 312.6 L548.6 308.6 L552.6 311.6"/>
<path class="m" d="M556 325 Q562 327.6 566 333 L572.6 337.4 M558 321.6 Q565.6 323.6 570 329.6 L577.6 333.6 M572.6 337.4 L594.2 326.5 M575.6 341 L596 330.5 M577.6 333.6 L592 326"/>
<path class="m" d="M591.7 321 Q592.6 317.6 595 318 Q597 320 596.7 324.4 M594.2 326.5 L598 329 L598 337 M598 329 L604 327 M586 345 L599 338.6 L604 341.6 M586 349 L599.6 342.6 M586 345 L586 352 M590.6 343 L590.6 350.6 M580.8 352 L586 349 M580.8 343 L580.8 364 M576.3 353 L580.8 350.6"/>
<path class="t" d="M594 337.4 Q597.6 335.6 599.6 338.6 M595 341 L601 338 M596.6 345.6 L602.6 342.6 M594 336.7 L594 345"/>
<path class="m" d="M597.4 339.6 L602.4 337.2 M596 343.6 L602.8 340.6" style="stroke-width:2.2"/>
<ellipse class="m" cx="575" cy="359.3" rx="2.3" ry="2.6"/>
<ellipse class="m" cx="575" cy="359.3" rx="1.1" ry="1.3"/>
<ellipse class="m" cx="569.6" cy="365" rx="1.8" ry="2.2"/>
<ellipse class="m" cx="520.6" cy="320.8" rx="1.6" ry="2"/>
<ellipse class="m" cx="520.4" cy="339.6" rx="1.6" ry="2"/>
<path class="m" d="M580.8 356.6 Q584 354 586 356.6 Q586.6 359.6 583.6 361 M588.6 352 Q590.6 350 592.6 352 L592.6 355.6 M583 346.6 Q584.6 345 586 346.6"/>
<path class="m" d="M578 340 Q580 338 582 340 L582 344 Q580 346 578 344Z M584 336.6 Q586 334.6 588 336.6 L588 340.6 M590.6 333.6 L590.6 338 M592.6 346 Q594.6 344 596.6 346 L596.6 349.6 Q594.6 351.4 592.6 349.6Z M586.6 353.6 L592 350.6 M598.6 346.6 L603 344.4 M583 330.6 L583 334.6 M587.6 328.4 L587.6 332.4 M578.6 347.6 Q581 349.6 580 352.6 M600 331.6 Q602 333.6 601 336.6"/>
<path class="m" d="M540 303.4 Q543 305.4 542 309 M546.6 304.6 L550 307 L550 311 M557 301.6 L557 306 M571.6 306.6 L571.6 312.6 M574.6 308.6 L574.6 314.6 M586.6 316.6 L590 320 L590 326 M563.6 318.6 Q566 320.6 565 324"/>
<ellipse class="m" cx="594.2" cy="321.2" rx="1.5" ry="2.1"/>
<path class="s" d="M522.3 356.7 L546.3 341.4"/>
<path class="s" d="M513.6 311.3 L549 316.6 L572 320.6"/>
<text class="l" text-anchor="middle" transform="scale(1.02,1)" x="468.7 474.2 479.8 485.3 490.8 496.3" y="464.9">92009C</text>
<path class="s" d="M491.6 466.9 L491.6 489.9"/>
<text class="l" text-anchor="middle" transform="scale(1.02,1)" x="491.5 497 502.5 508 513.5 519" y="474.5">92145A</text>
<path class="s" d="M515.6 476.7 L515.6 497.6"/>
<path class="wm2" d="M487.4 491.6 Q487.2 489.6 489.6 489.8 L493.6 491.4 Q495.2 493 494.6 495.6 Q493 497.2 490.6 496.6 Q487.6 495 487.4 491.6Z"/>
<path class="g" d="M494.8 492.2 L504.6 496 Q506 497.6 504.8 499.4 L494.4 495.8"/>
<path class="m" d="M496.2 492.8 L495.6 496.2"/>
<path class="m" d="M498 493.5 L497.4 496.9"/>
<path class="m" d="M499.8 494.2 L499.2 497.6"/>
<path class="m" d="M501.6 494.9 L501 498.3"/>
<path class="m" d="M503.4 495.6 L502.8 499"/>
<path class="g" d="M509.4 497.4 L520.8 502 L519.8 506 L508.4 501.2Z"/>
<path class="s" d="M510.2 497.6 L509.4 501.8"/>
<path class="s" d="M512 498.4 L511.2 502.6"/>
<path class="s" d="M513.8 499.1 L513 503.3"/>
<path class="s" d="M515.6 499.9 L514.8 504.1"/>
<path class="s" d="M517.4 500.6 L516.6 504.8"/>
<path class="s" d="M519.2 501.4 L518.4 505.6"/>
<path class="s" d="M521 504.2 L526.6 505.6"/>
<path class="s" d="M540.4 467.3 L540.4 482.2"/>
<circle class="w" cx="540.4" cy="461.4" r="5.9"/>
<text class="c" x="540.4" y="464.1" text-anchor="middle">G</text>
<path class="s" d="M580.2 481.8 L580.2 508.5"/>
<circle class="w" cx="580.2" cy="475.7" r="5.9"/>
<text class="c" x="580.2" y="478.4" text-anchor="middle">D</text>
<path class="s" d="M503.6 522.9 L503.6 511.8 L529.9 524.9 L529.9 499.7"/>
<circle class="w" cx="502.5" cy="528.9" r="5.9"/>
<text class="c" x="502.5" y="531.6" text-anchor="middle">F</text>
<path class="s" d="M567.5 541.8 L567.5 519.4"/>
<circle class="w" cx="567.5" cy="547.9" r="5.9"/>
<text class="c" x="567.5" y="550.6" text-anchor="middle">E</text>
<path class="s" d="M587.9 563.2 L587.9 550.1"/>
<circle class="w" cx="587.9" cy="569.4" r="5.9"/>
<text class="c" x="587.9" y="572.1" text-anchor="middle">G</text>
<path class="s" d="M605.4 576.4 L605.4 564.3"/>
<circle class="w" cx="605.4" cy="582.5" r="5.9"/>
<text class="c" x="605.4" y="585.2" text-anchor="middle">D</text>
<path class="wm2" d="M525.2 490.8 L550.6 475.4 Q553.6 474 556.6 475.4 L594.4 497.2 L594.4 500.4 L570.6 519.2 L525.2 493.6Z"/>
<path class="m" d="M525.2 490.8 L570.7 516.6 L594.4 497.6 M570.7 516.6 L570.7 519"/>
<path class="m" d="M536.6 492.5 L553.2 482.9 L558.6 485.8 L556 488 L562 491.4 L566.6 488.6 L582.1 497.4 L566.3 509.2Z"/>
<path class="m" d="M536.6 492.5 L536.6 496.6 L557 508.4 M553.2 482.9 L553.2 488.4 M541.6 495.2 L541.6 499.6 M546.8 498.2 L546.8 502.6 M552 501.2 L552 505.6 M557 508.4 L557 499 L562 496 L562 491.4 M557 499 L545 492.4 L545 488 M562 496 L572 501.6 L572 505 M566.6 488.6 L566.6 493.4 L576 498.8 M582.1 497.4 L582.1 499.6"/>
<path class="m" d="M568 491 Q570 489.4 572.4 491 Q573.4 493.4 571 494.6 M558 481 Q560 479.6 562 481 Q562.4 483 560 483.6"/>
<ellipse class="m" cx="540.1" cy="482.9" rx="1.5" ry="1.1"/>
<ellipse class="m" cx="528.7" cy="490.8" rx="1.5" ry="1.1"/>
<ellipse class="m" cx="568.1" cy="512.4" rx="1.5" ry="1.1"/>
<ellipse class="m" cx="589.1" cy="499.5" rx="1.5" ry="1.1"/>
<ellipse class="m" cx="579.5" cy="505.7" rx="1.5" ry="1.1"/>
<ellipse class="m" cx="556" cy="478.6" rx="1.5" ry="1.1"/>
<ellipse class="m" cx="575.6" cy="489.2" rx="1.5" ry="1.1"/>
<path class="m" d="M532.2 497.6 L533.1 510.9 Q537 516 545.3 520.6 L561.1 527.6 L561.1 513.6"/>
<path class="m" d="M561.1 527.6 L566 530.4 L570.7 528.4 L570.7 519 M575.1 515.6 L575.1 527.6 L570.7 528.4 M575.1 527.6 L582.1 524.1 L587.4 518.8 L587.4 504 M575.1 515.6 L580 512 L580 508.6 M580 512 L587.4 508.4 M566 530.4 L566 524.6 M570.7 523 L575.1 521.6 M577 520.6 L580 522.4 M578 526 Q581 527.6 583 525.6"/>
<ellipse class="m" cx="583.9" cy="519.7" rx="1.9" ry="2.3"/>
<ellipse class="m" cx="583.9" cy="519.7" rx="0.8" ry="1"/>
<path class="m" d="M579.6 505.7 L579.6 510.4"/>
<path class="g" d="M545.6 521.4 Q546 529.6 551.6 532.2 Q556.4 532.6 557.6 528.4 L557.4 526.6 Q551 524.6 545.6 521.4Z"/>
<path class="t" d="M548.6 524.6 Q549.6 529 553.6 530.8"/>
<ellipse class="s" cx="540.8" cy="531.5" rx="5.4" ry="6.7" transform="rotate(-20 540.8 531.5)"/>
<ellipse class="s" cx="540.8" cy="531.5" rx="3.8" ry="5.1" transform="rotate(-20 540.8 531.5)"/>
<path class="s" d="M543 539.2 L543 561.1"/>
<text class="l" text-anchor="middle" transform="scale(1.02,1)" x="518.7 524.2 529.8 535.3 540.8 546.3" y="569.3">11060E</text>
<text class="l" text-anchor="middle" transform="scale(1.02,1)" x="535.3 540.8 546.3 551.8 557.3" y="581.1">21188</text>
<path class="s" d="M524.4 577.9 L543 577.9"/>
<path class="s" d="M504.6 548.6 Q495.6 549.6 494 555.6 Q493.2 561 497.6 563.6 Q503 566 510 567 Q518.6 569.6 520.6 574 L521.6 577"/>
<path class="m" d="M506 551.6 Q498.4 552 497 556.6 Q496.6 560.6 500.6 562 Q506 563.6 512 564.4 Q521 566.6 523.4 571.6 L524 576.6"/>
<path class="m" d="M506.6 553.6 Q501.6 554.6 501.4 558.6 Q502.6 561 507 561.6 M507.6 556 Q504.6 557 505 559.6"/>
<path class="m" d="M521.6 577 Q520.6 581 515 582.4 M524 576.6 Q524.4 582 517.6 584.6"/>
<path class="wm2" d="M505 544.6 L514.6 539 L520.6 537 Q524.6 537.4 526 540.6 L527.4 545.6 Q527.6 548.6 525.6 550 L516.4 554.6 L510.6 553.6 Q506 552 505 548Z"/>
<path class="m" d="M514.7 539.2 Q513 543.6 515 548.6 Q516.4 552 518.6 553.4 M520.6 537 Q518.6 541.6 520.6 546.6 Q522.4 550 525.6 550 M517.6 538 L519.6 549.6 M509.6 542 Q508 546 510 550.4 Q511 552.6 512.6 553.6 M505 544.6 Q503.4 545.6 503.4 548.6 Q504 552 506.6 553"/>
<path class="k" d="M525.4 539.6 L531.3 537.4 L528.6 543.6 L527 544.6"/>
<path class="t" d="M524 538.4 L526.6 544.6"/>
<path class="wm2" d="M496.3 580.4 L505.6 576.6 L507 579.6 L497.6 584Z"/>
<path class="t" d="M496.3 580.4 L493.6 580 L491 577.6 L488.6 578.2 L487.6 580 L490 580.6 L492 583 L491 585.4 L488.6 585.6 L489.4 587.4 L493.4 587 L496 584.6 L497.6 584"/>
<path class="m" d="M505.6 576.6 L513 573.6 M507 579.6 L515 582.4"/>
<path class="wm2" d="M499.6 585.6 L508 582.4 L509.6 586 L501.4 590.4 Q499.4 590.6 498.9 588.6Z M508 582.4 L513.4 580 L515 583.4 L509.6 586"/>
<path class="m" d="M502.4 584.6 L503.8 588.6"/>
<path class="m" d="M505 583.6 L506.6 587.4"/>
<path class="m" d="M510.6 581.4 L512 584.6"/>
<path class="w" d="M617.0 464.59999999999997 L621.6 460.8 L625.6 459.2 Q628.6 460.59999999999997 628.8000000000001 464.59999999999997 Q628.8000000000001 468.2 626.4 470.0 L619.0 471.4 Q615.2 470.8 615.0 467.8 Q615.2 465.59999999999997 617.0 464.59999999999997Z"/>
<path class="g" d="M619.6 462.59999999999997 L624.2 460.59999999999997 Q626.6 464.8 625.2 470.0 L620.2 471.09999999999997 Q621.4 466.2 619.6 462.59999999999997Z"/>
<path class="s" d="M621 462.1 L621.6 470.7"/>
<path class="s" d="M622.4 461.5 L623 470.4"/>
<path class="s" d="M623.8 461 L624.4 470.1"/>
<ellipse class="s" cx="617.5" cy="467.9" rx="2.3" ry="3.4" transform="rotate(-20 617.5 467.9)"/>
<path class="s" d="M625.6 459.2 Q627.6 464.2 626.4 470.0 M624.2 460.59999999999997 L625.6 459.2 M627.2 460.0 L628.0 468.8"/>
<text class="l" text-anchor="middle" transform="scale(1.02,1)" x="640.3 645.8 651.3 656.8 662.3" y="469.4">92066</text>
<path class="s" d="M628.8 466.2 L650.2 466.2"/>
<path class="w" d="M627.8 499.7 L632.4 495.90000000000003 L636.4 494.3 Q639.4 495.7 639.6 499.7 Q639.6 503.3 637.1999999999999 505.1 L629.8 506.5 Q626.0 505.90000000000003 625.8 502.90000000000003 Q626.0 500.7 627.8 499.7Z"/>
<path class="g" d="M630.4 497.7 L635.0 495.7 Q637.4 499.90000000000003 636.0 505.1 L631.0 506.2 Q632.1999999999999 501.3 630.4 497.7Z"/>
<path class="s" d="M631.8 497.2 L632.4 505.8"/>
<path class="s" d="M633.2 496.6 L633.8 505.5"/>
<path class="s" d="M634.6 496.1 L635.2 505.2"/>
<ellipse class="s" cx="628.3" cy="503" rx="2.3" ry="3.4" transform="rotate(-20 628.3 503)"/>
<path class="s" d="M636.4 494.3 Q638.4 499.3 637.1999999999999 505.1 M635.0 495.7 L636.4 494.3 M638.0 495.1 L638.8 503.90000000000003"/>
<text class="l" text-anchor="middle" transform="scale(1.02,1)" x="650.6 656.1 661.6 667.1 672.6" y="504.6">92066</text>
<path class="s" d="M639.3 501.5 L660.5 501.5"/>
<ellipse class="s" cx="609" cy="473.6" rx="3" ry="4.5" transform="rotate(-35 609 473.6)"/>
<ellipse class="s" cx="609" cy="473.6" rx="1.8" ry="3.2" transform="rotate(-35 609 473.6)"/>
<text class="l" text-anchor="middle" transform="scale(1.02,1)" x="625.3 630.8 636.3 641.8 647.3 652.9" y="478.8">11060D</text>
<path class="s" d="M612.8 475.2 L634.9 475.2"/>
<ellipse class="s" cx="619.2" cy="508.4" rx="3" ry="4.5" transform="rotate(-35 619.2 508.4)"/>
<ellipse class="s" cx="619.2" cy="508.4" rx="1.8" ry="3.2" transform="rotate(-35 619.2 508.4)"/>
<text class="l" text-anchor="middle" transform="scale(1.02,1)" x="635.6 641.1 646.6 652.1 657.6 663.1" y="513.8">11060D</text>
<path class="s" d="M623.3 510.2 L645.2 510.2"/>
<path class="k" d="M588.4 484 L590.0 481 L593.0 480 L595.4 481.6 L596.0 484.6 L594.0 486.6 L590.4 486.6Z"/>
<ellipse class="w" cx="593" cy="482" rx="1.6" ry="1"/>
<path class="s" d="M598.6 478.9 L605.1 475.2"/>
<text class="l" text-anchor="middle" transform="scale(1.02,1)" x="608.1 613.7 619.2 624.7 630.2 635.7 641.2 646.7 652.2 657.7 663.2" y="488.2">92063/B/D~G</text>
<path class="s" d="M596.4 484.8 L617.4 484.8"/>
<path class="k" d="M599 518.4 L600.6 515.4 L603.6 514.4 L606 516.0 L606.6 519.0 L604.6 521.0 L601 521.0Z"/>
<ellipse class="w" cx="603.6" cy="516.4" rx="1.6" ry="1"/>
<path class="s" d="M608.6 513.6 L615.4 510"/>
<text class="l" text-anchor="middle" transform="scale(1.02,1)" x="618.4 624 629.5 635 640.5 646 651.5 657 662.5 668 673.5 679" y="523.2">92063A/C/H~K</text>
<path class="s" d="M606.9 520.1 L627.7 520.1"/>
<path class="s" d="M589.4 508.5 L594.2 507.4 L594.2 521.6 L598.6 521.6"/>
<ellipse class="k" cx="587.9" cy="539.2" rx="2.3" ry="2.6"/>
<path class="s" d="M586.4 541.6 L586.4 548.6 Q587.9 550 589.4 548.6 L589.4 541.6"/>
<text class="l" text-anchor="middle" transform="scale(1.02,1)" x="601.3 606.8 612.3 617.8 623.3 628.8 634.3 639.9" y="542.3">16158A/B</text>
<path class="s" d="M590.6 539.2 L610.2 539.2"/>
<ellipse class="k" cx="605.4" cy="552.4" rx="2.3" ry="2.6"/>
<path class="s" d="M603.9 554.8 L603.9 562.8 Q605.4 564.2 606.9 562.8 L606.9 554.8"/>
<text class="l" text-anchor="middle" transform="scale(1.02,1)" x="621.5 627 632.5 638 643.5 649 654.5 660 665.6" y="556.1">16158/A/C</text>
<path class="s" d="M608.2 552.7 L631 552.7"/>
<text class="l" text-anchor="middle" transform="scale(1.02,1)" x="668.2 673.8 679.3 684.8 690.3 695.8 701.3 706.8 712.3" y="580.6">16184/A/B</text>
<path class="s" d="M656.1 577.4 L678.7 577.4"/>
<rect class="b" x="715.5" y="416.6" width="78.5" height="64.6"/>
<text class="l" text-anchor="middle" transform="scale(1.02,1)" x="708.9" y="475.7">A</text>
<text class="l" text-anchor="middle" transform="scale(1.02,1)" x="744.3 749.8 755.3 760.9 766.4" y="428.2">16041</text>
<path class="s" d="M770.5 431.2 L770.5 452.1"/>
<path class="w" d="M724.8 426.9 Q721.4 427.4 721.6 430.6 Q721.8 432.6 723.4 433 L773.4 462.6 L777.1 455.4 Z"/>
<ellipse class="s" cx="724" cy="429.8" rx="1.6" ry="2.4" transform="rotate(-30 724 429.8)"/>
<path class="s" d="M725.6 431.4 L773 459.2"/>
<path class="s" d="M723.4 433 L773.4 462.6" style="stroke-width:1.9"/>
<ellipse class="k" cx="735.6" cy="435.6" rx="0.5" ry="0.5"/>
<ellipse class="k" cx="757.6" cy="448.2" rx="0.5" ry="0.5"/>
<path class="w" d="M773.6 459 Q774.6 455 778.6 455.6 L785.6 456.6 Q788 458.6 787.6 461.6 Q786.6 464.4 783.6 464.3 L776 463 Q773.4 462 773.6 459Z"/>
<ellipse class="s" cx="777.6" cy="459.2" rx="1.7" ry="2.2"/>
<ellipse class="k" cx="784.7" cy="461.2" rx="1.9" ry="2.6"/>
<path class="t" d="M784.6 464.6 L787 466.6 L786.4 468.6"/>
<path class="s" d="M781.2 468.6 L787.8 467.8 L788.2 474.6 L782 475.6 L781.4 472.6 L784 472 L783.8 470.2 L781.4 470.6Z"/>
<path class="s" d="M720 508.5 L720 520.5"/>
<circle class="w" cx="720" cy="502.3" r="6.1"/>
<text class="c" x="720" y="505" text-anchor="middle">E</text>
<path class="w" d="M717.7 521.1999999999999 L717.7 527.1999999999999 L722.3 527.1999999999999 L722.3 521.1999999999999 Q720 519.8 717.7 521.1999999999999Z"/>
<path class="s" d="M717.7 522.4 L722.3 523"/>
<path class="s" d="M717.7 524 L722.3 524.6"/>
<path class="s" d="M717.7 525.6 L722.3 526.2"/>
<path class="g" d="M715.5 528.1999999999999 Q720 526.0 724.5 528.1999999999999 L724.5 531.8 Q720 534.8 715.5 531.8Z"/>
<path class="s" d="M715.5 530.0 Q720 532.4 724.5 530.0"/>
<text class="l" text-anchor="middle" transform="scale(1.02,1)" x="734.3 739.8 745.3 750.9 756.4 761.9" y="533.5">92009B</text>
<path class="s" d="M725 530.3 L745.8 530.3"/>
<path class="s" d="M786.8 521.6 L786.8 538"/>
<circle class="w" cx="786.8" cy="515.5" r="6.1"/>
<text class="c" x="786.8" y="518.2" text-anchor="middle">F</text>
<path class="w" d="M777.6 539.1 L788.5 536.9 L792.9 540.2 L783 544.6 Z M777.6 539.1 L777.6 549 L779.7 554.4 L783 552 L783 544.6 M773.2 543.5 L777.6 541.6 M773.2 543.5 L773.2 551.1 L775.6 552.6 L775.6 545 L777.6 544 M792.9 540.2 L792.9 542.4 L783 547"/>
<ellipse class="s" cx="786.4" cy="540.4" rx="1.6" ry="1.1"/>
<text class="l" text-anchor="middle" transform="scale(1.02,1)" x="711.6 717.1 722.6 728.1 733.6" y="550.4">92171</text>
<path class="s" d="M750.2 547.2 L772.7 547.2"/>
<text class="l" text-anchor="middle" transform="scale(1.02,1)" x="715.9 721.4 726.9 732.4 737.9 743.4" y="567.4">92009B</text>
<path class="s" d="M761.1 564.3 L781.9 564.3"/>
<path class="w" d="M785.1 556.0 L785.1 562.0 L789.6999999999999 562.0 L789.6999999999999 556.0 Q787.4 554.6 785.1 556.0Z"/>
<path class="s" d="M785.1 557.2 L789.7 557.8"/>
<path class="s" d="M785.1 558.8 L789.7 559.4"/>
<path class="s" d="M785.1 560.4 L789.7 561"/>
<path class="g" d="M782.9 563.0 Q787.4 560.8000000000001 791.9 563.0 L791.9 566.6 Q787.4 569.6 782.9 566.6Z"/>
<path class="s" d="M782.9 564.8000000000001 Q787.4 567.2 791.9 564.8000000000001"/>
</svg>
<div id="thead"></div>
<div class="row" style="top:678px;background:#fff"></div>
<div class="row" style="top:696px;background:#6b9bd6;height:17px"></div>
<div class="row" style="top:713px;background:#fff;height:16px"></div>
<svg style="position:absolute;left:83.5px;top:657px" width="8" height="11" viewBox="0 0 8 11"><path d="M4 0.600 L7.400 4.600 H0.600 Z M4 10.400 L7.400 6.400 H0.600 Z" fill="#fff"/></svg>
<svg style="position:absolute;left:166.5px;top:657px" width="8" height="11" viewBox="0 0 8 11"><path d="M4 0.600 L7.400 4.600 H0.600 Z M4 10.400 L7.400 6.400 H0.600 Z" fill="#fff"/></svg>
<svg style="position:absolute;left:261.5px;top:657px" width="8" height="11" viewBox="0 0 8 11"><path d="M4 0.600 L7.400 4.600 H0.600 Z M4 10.400 L7.400 6.400 H0.600 Z" fill="#fff"/></svg>
<svg style="position:absolute;left:541px;top:657px" width="8" height="11" viewBox="0 0 8 11"><path d="M4 0.600 L7.400 4.600 H0.600 Z M4 10.400 L7.400 6.400 H0.600 Z" fill="#fff"/></svg>
<svg style="position:absolute;left:637.5px;top:657px" width="8" height="11" viewBox="0 0 8 11"><path d="M4 0.600 L7.400 4.600 H0.600 Z M4 10.400 L7.400 6.400 H0.600 Z" fill="#fff"/></svg>
<svg style="position:absolute;left:1041.5px;top:657px" width="8" height="11" viewBox="0 0 8 11"><path d="M4 0.600 L7.400 4.600 H0.600 Z M4 10.400 L7.400 6.400 H0.600 Z" fill="#fff"/></svg>
<svg style="position:absolute;left:373px;top:654px" width="12" height="12" viewBox="0 0 12 12"><rect x="0" y="0" width="11.5" height="11.5" rx="1.5" fill="#1a73e8"/><path d="M2.400 6 L4.800 8.400 L9.400 3.200" fill="none" stroke="#fff" stroke-width="1.7"/></svg>
<svg style="position:absolute;left:582px;top:654px" width="12" height="12" viewBox="0 0 12 12"><rect x="0" y="0" width="11.5" height="11.5" rx="1.5" fill="#1a73e8"/><path d="M2.400 6 L4.800 8.400 L9.400 3.200" fill="none" stroke="#fff" stroke-width="1.7"/></svg>
<svg style="position:absolute;left:807px;top:654px" width="12" height="12" viewBox="0 0 12 12"><rect x="0" y="0" width="11.5" height="11.5" rx="1.5" fill="#1a73e8"/><path d="M2.400 6 L4.800 8.400 L9.400 3.200" fill="none" stroke="#fff" stroke-width="1.7"/></svg>
<svg style="position:absolute;left:1091px;top:654px" width="12" height="12" viewBox="0 0 12 12"><rect x="0" y="0" width="11.5" height="11.5" rx="1.5" fill="#1a73e8"/><path d="M2.400 6 L4.800 8.400 L9.400 3.200" fill="none" stroke="#fff" stroke-width="1.7"/></svg>
<div class="th" style="left:119px">Ref #</div>
<div class="th" style="left:206px">Part #</div>
<div class="th" style="left:387.5px">Description</div>
<div class="th" style="left:595px">Qty</div>
<div class="th" style="left:821.5px">Context Note</div>
<div class="th" style="left:1105.5px">Foot Note</div>
<svg style="position:absolute;left:75px;top:678.5px" width="16" height="17" viewBox="0 0 16 17"><rect x="0.9" y="2" width="13.2" height="13" rx="1.600" fill="#fff" stroke="#1a1a1a" stroke-width="1.100"/><path d="M14.300 4v10.200q0 1.400-1.400 1.400H2.600" stroke="#111" stroke-width="1.500" fill="none"/><path d="M2.200 1.300h10.800" stroke="#1a1a1a" stroke-width="1.700" stroke-dasharray="1.100 0.850"/><path d="M3.200 6.400h4.600M3.200 9h3.200M3.600 11.600h2M9.800 9.200h2M10 11.800h1.600" stroke="#15156e" stroke-width="1.500"/><path d="M5.400 10.200l2.200 2.600l4.200-7.800" fill="none" stroke="#15156e" stroke-width="2"/></svg>
<div class="td n" style="left:140px;top:680px">11060</div>
<div class="td n" style="left:228.7px;top:680px">11060-7009</div>
<div class="td" style="left:416.3px;top:680px">GASKET,AIR FILTER</div>
<div class="td n" style="left:604px;top:680px">1</div>
<svg style="position:absolute;left:75px;top:696.5px" width="16" height="17" viewBox="0 0 16 17"><rect x="0.9" y="2" width="13.2" height="13" rx="1.600" fill="#fff" stroke="#1a1a1a" stroke-width="1.100"/><path d="M14.300 4v10.200q0 1.400-1.400 1.400H2.600" stroke="#111" stroke-width="1.500" fill="none"/><path d="M2.200 1.300h10.800" stroke="#1a1a1a" stroke-width="1.700" stroke-dasharray="1.100 0.850"/><path d="M3.200 6.400h4.600M3.200 9h3.200M3.600 11.600h2M9.800 9.200h2M10 11.800h1.600" stroke="#15156e" stroke-width="1.500"/><path d="M5.400 10.200l2.200 2.600l4.200-7.800" fill="none" stroke="#15156e" stroke-width="2"/></svg>
<div class="td n" style="left:140px;top:698px">11060A</div>
<div class="td n" style="left:228.7px;top:698px">11060-7010</div>
<div class="td" style="left:416.3px;top:698px">GASKET,CARBURETOR</div>
<div class="td n" style="left:604px;top:698px">2</div>
<svg style="position:absolute;left:75px;top:714.5px" width="16" height="17" viewBox="0 0 16 17"><rect x="0.9" y="2" width="13.2" height="13" rx="1.600" fill="#fff" stroke="#1a1a1a" stroke-width="1.100"/><path d="M14.300 4v10.200q0 1.400-1.400 1.400H2.600" stroke="#111" stroke-width="1.500" fill="none"/><path d="M2.200 1.300h10.800" stroke="#1a1a1a" stroke-width="1.700" stroke-dasharray="1.100 0.850"/><path d="M3.200 6.400h4.600M3.200 9h3.200M3.600 11.600h2M9.800 9.200h2M10 11.800h1.600" stroke="#15156e" stroke-width="1.500"/><path d="M5.400 10.200l2.200 2.600l4.200-7.800" fill="none" stroke="#15156e" stroke-width="2"/></svg>
<div class="td n" style="left:140px;top:716px">11060B</div>
<div class="td n" style="left:228.7px;top:716px">11060-7011</div>
<div class="td" style="left:416.3px;top:716px">GASKET,MANIFOLD</div>
<div class="td n" style="left:604px;top:716px">2</div>
<div id="botline"></div>
</body></html>
